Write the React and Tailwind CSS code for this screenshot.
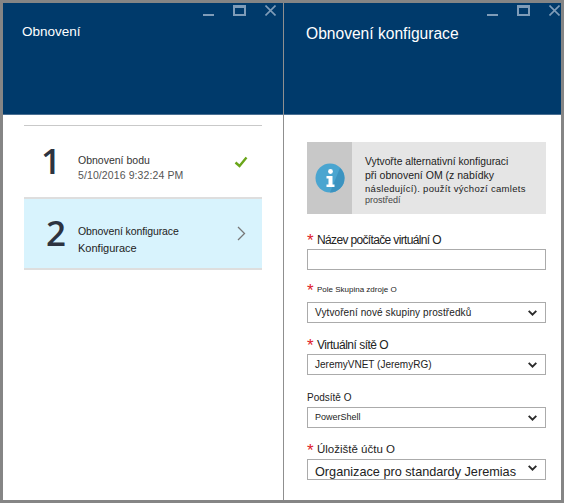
import React from "react";

function WinButtons({ pos }) {
  return (
    <div className={"absolute top-[2px] flex items-start gap-[19px] " + pos}>
      <svg width="11" height="11" viewBox="0 0 11 11"><rect x="0" y="9" width="11" height="2" fill="#7f9cb8" /></svg>
      <svg width="13" height="11" viewBox="0 0 13 11"><rect x="1" y="1" width="11" height="9" fill="none" stroke="#7f9cb8" strokeWidth="2" /><rect x="0" y="0" width="13" height="3" fill="#7f9cb8" /></svg>
      <svg width="11" height="11" viewBox="0 0 11 11"><path d="M0.5 0.5 L10.5 10.5 M10.5 0.5 L0.5 10.5" stroke="#7f9cb8" strokeWidth="1.6" fill="none" /></svg>
    </div>
  );
}

function Chevron() {
  return (
    <svg width="9" height="6" viewBox="0 0 9 6" className="shrink-0 block"><path d="M0.7 0.8 L4.5 4.6 L8.3 0.8" stroke="#2a2a2a" strokeWidth="1.9" fill="none" /></svg>
  );
}

function Star() {
  return <span className="text-[#e0202c] text-[17px] leading-[14px] w-[10px] h-[12px] inline-block">*</span>;
}

function Field({ label, star, labelClass, mt, mb = "mb-[3px]", boxClass, children, chevronClass = "" }) {
  return (
    <div className={mt}>
      <div className={"flex items-center h-[13px] text-[#222] " + mb + " " + labelClass}>
        {star && <Star />}
        <span>{label}</span>
      </div>
      <div className={"h-[21px] border border-[#ababab] bg-white flex items-center justify-between pl-[7px] pr-[8px] text-[#222] " + boxClass}>
        <span className="whitespace-nowrap">{children}</span>
        {children ? <span className={chevronClass}><Chevron /></span> : null}
      </div>
    </div>
  );
}

export default function App() {
  return (
    <div className="w-[564px] h-[503px] border-[3px] border-[#858585] bg-white flex overflow-hidden" style={{ fontFamily: '"Liberation Sans", Arial, sans-serif' }}>
      <section className="w-[281px] shrink-0 border-r border-[#8f8f8f] flex flex-col">
        <header className="relative h-[112px] bg-[#003a6b] border-b border-[#4a6f92] shrink-0 pl-[19px] pt-[21px] text-white text-[13.5px] leading-[16px]">
          <WinButtons pos="right-[7px]" />
          Obnovení
        </header>
        <div className="pl-[21px] pr-[21px] pt-[10px]">
          <div className="border-t border-[#c9c9c9]" />
          <div className="h-[71px] flex items-center pl-[17px] pr-[14px]">
            <span className="w-[37px] text-[35px] leading-none text-[#2d3340] font-semibold pb-[2px]" style={{ fontFamily: '"Open Sans", sans-serif' }}>1</span>
            <div className="flex-1 pt-[13px]">
              <div className="text-[10.5px] leading-[14px] text-[#333]">Obnovení bodu</div>
              <div className="text-[10.5px] leading-[16px] text-[#555] tracking-[0.1px]">5/10/2016 9:32:24 PM</div>
            </div>
            <svg width="14" height="12" viewBox="0 0 14 12"><path d="M1.5 6.5 L5.5 10 L12.5 1.5" stroke="#6aa61a" strokeWidth="2.4" fill="none" /></svg>
          </div>
          <div className="h-[73px] bg-[#d8f3fd] border-y-2 border-[#dedede] flex items-center pl-[22px] pr-[16px]">
            <span className="w-[32px] text-[35px] leading-none text-[#2d3340] font-semibold pb-[2px]" style={{ fontFamily: '"Open Sans", sans-serif' }}>2</span>
            <div className="flex-1 pt-[13px]">
              <div className="text-[10.5px] leading-[16px] text-[#222] tracking-[-0.1px]">Obnovení konfigurace</div>
              <div className="text-[11px] leading-[18px] text-[#222]">Konfigurace</div>
            </div>
            <svg width="9" height="15" viewBox="0 0 9 15"><path d="M1 1 L7.5 7.5 L1 14" stroke="#777" strokeWidth="1.3" fill="none" /></svg>
          </div>
        </div>
      </section>
      <section className="flex-1 flex flex-col min-w-0">
        <header className="relative h-[112px] bg-[#003a6b] border-b border-[#4a6f92] shrink-0 pl-[22px] pt-[22px] text-white text-[15.6px] leading-[18px]">
          <WinButtons pos="right-[1px]" />
          Obnovení konfigurace
        </header>
        <div className="pl-[23px] pr-[15px] pt-[27px]">
          <div className="h-[72px] flex bg-[#e5e5e5]">
            <div className="w-[45px] bg-[#c8c8c8] flex items-center justify-center">
              <svg width="30" height="30" viewBox="0 0 30 30">
                <circle cx="15" cy="15" r="14.5" fill="#4aa5d0" />
                <path d="M15 29.5 A14.5 14.5 0 0 0 29.5 15 A14 14 0 0 0 25 5 Z" fill="#3b93c0" />
                <circle cx="15.5" cy="8.5" r="2.4" fill="#fff" />
                <path d="M11.5 13 H17.5 V21.5 H19.5 V24 H11.5 V21.5 H13.5 V15.5 H11.5 Z" fill="#fff" />
              </svg>
            </div>
            <div className="pl-[13px] pt-[13px] text-[#222]">
              <div className="text-[10.3px] leading-[13px]">Vytvořte alternativní konfiguraci</div>
              <div className="text-[10.5px] leading-[14px]">při obnovení OM (z nabídky</div>
              <div className="text-[9.5px] leading-[14px] tracking-[0.3px]">následující). použít výchozí camlets</div>
              <div className="text-[9px] leading-[11px] text-[#444] -mt-[1px]">prostředí</div>
            </div>
          </div>
          <Field star label="Název počítače virtuální O" labelClass="text-[12px] tracking-[-0.65px]" mt="mt-[19px]" boxClass="" />
          <Field star label="Pole Skupina zdroje O" labelClass="text-[8px]" mt="mt-[13px]" mb="mb-[6px]" boxClass="text-[10px] tracking-[0.1px]">Vytvoření nové skupiny prostředků</Field>
          <Field star label="Virtuální sítě O" labelClass="text-[12px] tracking-[-0.5px]" mt="mt-[15px]" boxClass="text-[10px]">JeremyVNET (JeremyRG)</Field>
          <Field label="Podsítě O" labelClass="text-[10px]" mt="mt-[16px]" boxClass="text-[9px]">PowerShell</Field>
          <Field star label="Úložiště účtu O" labelClass="text-[11.5px]" mt="mt-[15px]" boxClass="text-[12.7px] leading-[14px] !items-end" chevronClass="pb-[8px] block">Organizace pro standardy Jeremias</Field>
        </div>
      </section>
    </div>
  );
}
